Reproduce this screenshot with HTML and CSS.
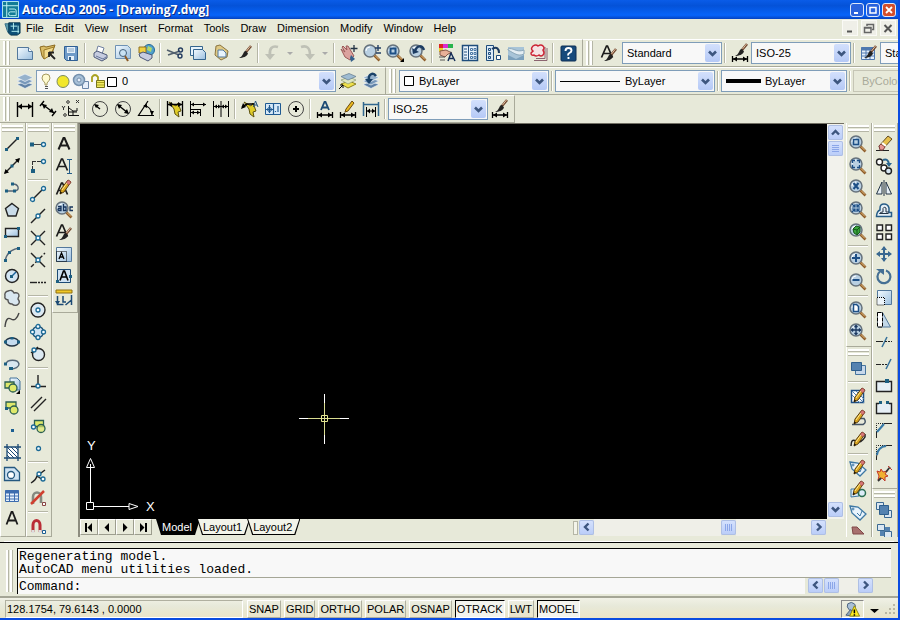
FILE: index.html
```html
<!DOCTYPE html>
<html lang="en">
<head>
<meta charset="utf-8">
<title>AutoCAD 2005 - [Drawing7.dwg]</title>
<link rel="stylesheet" href="styles.css">
</head>
<body>
<svg class="defs" aria-hidden="true">
  <defs>
    <linearGradient id="sheet" x1="0" y1="0" x2="1" y2="1"><stop offset="0" stop-color="#f4fbff"/><stop offset="1" stop-color="#9bbfdf"/></linearGradient>
    <symbol id="chev"><path d="M4 5.500l3.500 3.500 3.500-3.500" fill="none" stroke="#3d567f" stroke-width="2.600"/></symbol>
    <symbol id="lens"><circle cx="8" cy="8" r="6" fill="#b9d0e2" stroke="#66727c" stroke-width="1.500"/><path d="M4 8a4 4 0 0 1 4-4" stroke="#fff" fill="none"/><path d="M12.500 12.500l5 5" stroke="#8c5a28" stroke-width="2.600"/><path d="M13 12.500l4 4" stroke="#e8c080"/></symbol>
    <symbol id="pencil"><path d="M14 2l3 2-7 10-4 2 1-5z" fill="#d9a520" stroke="#5b4010"/><path d="M14 2l3 2-2 3-3-2z" fill="#d87878" stroke="#8a4040" stroke-width=".600"/><path d="M8 12l5-7" stroke="#ffe890"/><path d="M6 16l.500-2.500 1.500 1z" fill="#000"/></symbol>
    <symbol id="brush"><path d="M17 3l-5 6" stroke="#704830" stroke-width="2.600"/><path d="M16.500 3l-4 5" stroke="#e0bca0"/><path d="M12 8l2 2.500c-1 3-5 4.500-9 4.500 2-1 3-2 4-4s1-3 3-3z" fill="#222" stroke="none"/></symbol>
    <symbol id="dim"><path d="M2.500 13v6M17.500 13v6M3 16h14" stroke="#000" stroke-width="1.300"/><path d="M3 16l4-2.500v5zM17 16l-4-2.500v5z" fill="#000" stroke="none"/></symbol>
    <symbol id="layers"><path d="M2 13.500l8-3 8 3-8 4z" fill="#5f81a6" stroke="#eef3f8" stroke-width=".700"/><path d="M2 10l8-3 8 3-8 4z" fill="#7898ba" stroke="#eef3f8" stroke-width=".700"/><path d="M2 6.500l8-3.500 8 3.500-8 4z" fill="#96b2cc" stroke="#eef3f8" stroke-width=".700"/></symbol>
    <symbol id="bolt"><path d="M4 3l7 4 2-3 3 8-3 1 1 5-4-3-1-5z" fill="#e0cc28" stroke="#5c5210"/></symbol>
    <symbol id="obj"><path d="M6.500 4.500h9v6h-9z" fill="#dfe96b" stroke="#2b5f52" stroke-width="1.300"/><circle cx="13" cy="12.500" r="4" fill="#dfe96b" fill-opacity=".700" stroke="#2b5f52" stroke-width="1.300"/></symbol>
    <symbol id="paper"><path d="M2.500 4.500h11l4 4v8h-15z" fill="url(#sheet)" stroke="#53789c"/><path d="M13.500 4.500v4h4" fill="#fff" stroke="#53789c"/></symbol>
    <symbol id="printer"><path d="M6 10l2-7 6 2-2 6" fill="#fff" stroke="#7181a0"/><path d="M4 10l3-2 10 4v3l-5 3-8-4z" fill="#c6cce0" stroke="#4c5878"/><path d="M6 13l7 3 3-2" fill="none" stroke="#68789c"/></symbol>
    <symbol id="bigA"><path d="M2.500 14.500L7.500 3h1l5 11.500M4.500 10.500h7" fill="none" stroke="#1b1b1b" stroke-width="1.700"/></symbol>
    <symbol id="tag"><path d="M2 4l8 1 8 7-6 6-8-7z" fill="#e8f3fc" stroke="#3e78a4" stroke-width="1.300"/><circle cx="5" cy="7" r="1" fill="none" stroke="#3e78a4"/><path d="M9 11l3 3 2-5" fill="none" stroke="#3e78a4"/></symbol>
  </defs>
</svg>

<header class="titlebar">
  <svg class="i18" viewBox="0 0 18 18"><path d="M.500 .500h17v17h-17z" fill="#127c96" stroke="#b9eef2"/><path d="M5 1v16M1 5h16M7.500 8.500h5.500q2 0 2 2v5H9q-2 0-2-2t2-2h5" fill="none" stroke="#c6f6f6"/></svg>
  <h1>AutoCAD 2005 - [Drawing7.dwg]</h1>
  <div class="winctl">
    <button aria-label="Minimize"><svg class="i12"><path d="M3 9h4" stroke="#fff" stroke-width="2"/></svg></button>
    <button aria-label="Maximize"><svg class="i12"><path d="M3 3.500h6v5.500H3z" stroke="#fff" stroke-width="1.500"/></svg></button>
    <button class="close" aria-label="Close"><svg class="i12"><path d="M3 3l6 6M9 3l-6 6" stroke="#fff" stroke-width="1.800"/></svg></button>
  </div>
</header>

<nav class="menubar">
  <svg class="i18" viewBox="0 0 18 18"><path d="M1 4h12v9H4z" fill="#5d9cb0" stroke="#356d85"/><path d="M5 3h12v11l-3 2H7l-2-2z" fill="#0d5078" stroke="#073650"/><path d="M10 3v7M7 6.500h7M15 6v8M8 12h8" stroke="#b8f2f4"/></svg>
  <button>File</button><button>Edit</button><button>View</button><button>Insert</button><button>Format</button><button>Tools</button><button>Draw</button><button>Dimension</button><button>Modify</button><button>Window</button><button>Help</button>
  <div class="mdi">
    <button aria-label="Minimize drawing"><svg class="i12"><path d="M3 9.500h5" stroke="#555" stroke-width="2"/></svg></button>
    <button aria-label="Restore drawing"><svg class="i12"><path d="M4 4V2.500h6.500v5H9M1.500 5.500h6.500v5H1.500zM1.500 6h6.500" stroke="#666" stroke-width="1.500"/></svg></button>
    <button aria-label="Close drawing"><svg class="i12"><path d="M2.500 3l7 7M9.500 3l-7 7" stroke="#555" stroke-width="2"/></svg></button>
  </div>
</nav>

<div class="row">
  <div class="bar">
    <span class="grip"></span>
    <button class="t" aria-label="New"><svg><use href="#paper"/></svg></button>
    <button class="t" aria-label="Open"><svg><path d="M2 4l4-1 2 1 9-2-3 8-8 6-2-3z" fill="#d9bc66" stroke="#8b6a20"/><path d="M6 7l10-3-3 8-7 4z" fill="#f2dc90" stroke="#9b7a28"/><path d="M11 10l6 6M11 9v5M11 9.500h5" stroke="#222" stroke-width="1.800"/></svg></button>
    <button class="t" aria-label="Save"><svg><path d="M3.500 3.500h13v14h-11l-2-2z" fill="#6f9bc8" stroke="#2f5f94"/><path d="M6 4h8v6H6zM7 13h6v4H7z" fill="#e6f1fb"/><path d="M7 6h6M7 8h6" stroke="#86a5c2"/><path d="M9 14v3" stroke="#315d8a" stroke-width="2"/></svg></button>
    <span class="sep"></span>
    <button class="t" aria-label="Plot"><svg><use href="#printer"/></svg></button>
    <button class="t" aria-label="Plot Preview"><svg><path d="M2.500 2.500h12l3 3v10h-15z" fill="url(#sheet)" stroke="#6f92b4"/><circle cx="10" cy="10" r="3.500" fill="#c8e2f4" stroke="#44617c"/><path d="M12 13l3 5" stroke="#8c5a28" stroke-width="2"/></svg></button>
    <button class="t" aria-label="Publish"><svg><circle cx="13" cy="7" r="5.500" fill="#4fa0cc" stroke="#246898"/><path d="M12 3l4 2-1 4-4-2z" fill="#b4d868"/><path d="M3 4h7v6H3z" fill="#f0d040" stroke="#907020"/><path d="M3 11l4-2 9 3v3l-4 3-8-4z" fill="#c6cce0" stroke="#4c5878"/></svg></button>
    <span class="sep"></span>
    <button class="t" aria-label="Cut"><svg><path d="M2 7l12 5M3 12l12-4" stroke="#52606e" stroke-width="1.600"/><circle cx="15.500" cy="7" r="2" stroke="#243c60" stroke-width="1.400"/><circle cx="15" cy="13" r="2" stroke="#243c60" stroke-width="1.400"/></svg></button>
    <button class="t" aria-label="Copy"><svg><path d="M2.500 3.500h12v9h-12z" fill="#e8f4fd" stroke="#35658e"/><path d="M5.500 6.500h9l3 3v7h-12z" fill="url(#sheet)" stroke="#35658e"/></svg></button>
    <button class="t" aria-label="Paste"><svg><path d="M5 3l4-1 8 6-1 6-6 3-6-5z" fill="#dfc985" stroke="#8a7440"/><path d="M7 7h5l3 3v4H7z" fill="#e8f4fd" stroke="#53789c"/></svg></button>
    <button class="t" aria-label="Match Properties"><svg><use href="#brush"/></svg></button>
    <span class="sep"></span>
    <button class="t" aria-label="Undo"><svg><path d="M15 4C9 2 6 6 7 12" stroke="#bfc1b6" stroke-width="2.600"/><path d="M2 11h10l-5 6z" fill="#bfc1b6"/></svg></button>
    <button class="drop" aria-label="Undo list"><svg class="i8"><path d="M1 3h6L4 6z" fill="#aaa"/></svg></button>
    <button class="t" aria-label="Redo"><svg><path d="M3 4c6-2 9 1 9 8" stroke="#bfc1b6" stroke-width="2.600"/><path d="M7 11h10l-5 6z" fill="#bfc1b6"/></svg></button>
    <button class="drop" aria-label="Redo list"><svg class="i8"><path d="M1 3h6L4 6z" fill="#aaa"/></svg></button>
    <span class="sep"></span>
    <button class="t" aria-label="Pan"><svg><path d="M2 6l4 3-3-5 1-1 4 4-1-4h2l3 5 3 5-4 4-5-3z" fill="#dba29e" stroke="#9b5a58"/><path d="M12 12l4 4-4 3-1-4z" fill="#35608a"/><path d="M15 2v7M11.500 5.500h7" stroke="#234" stroke-width="1.300"/></svg></button>
    <button class="t" aria-label="Zoom Realtime"><svg><use href="#lens"/><path d="M16 2v6M13 5h6M14 10h5" stroke="#233f66" stroke-width="1.400"/></svg></button>
    <button class="t" aria-label="Zoom Window"><svg><use href="#lens"/><path d="M5.500 5.500h5v5h-5z" stroke="#1d4f86" stroke-width="2"/><path d="M19 15v4h-4z" fill="#000"/></svg></button>
    <button class="t" aria-label="Zoom Previous"><svg><use href="#lens"/><path d="M7 8C9 2 14 2 16 7" stroke="#1c3c62" stroke-width="2.500"/><path d="M4 5l1 6 6-2z" fill="#1c3c62"/></svg></button>
    <span class="sep"></span>
    <button class="t" aria-label="Properties"><svg><path d="M2 1h4v4H2z" fill="#d22"/><path d="M6 1h5v4H6z" fill="#db2bd0"/><path d="M11 1h5v4h-5z" fill="#28b44c"/><path d="M2 5h4v4H2z" fill="#ead028"/><path d="M3 8l6-1 6 3-4 1-3 3-5-2z" fill="#e8b198" stroke="#84584a"/><path d="M2 14h6M3 17h5" stroke="#555"/><path d="M11 18l3-8 4 8M12 15.500h4" stroke="#162f58" stroke-width="1.500"/></svg></button>
    <button class="t" aria-label="DesignCenter"><svg><path d="M2.500 2.500h15v15h-15z" fill="#eaf4fc" stroke="#1f4d7c" stroke-width="1.500"/><path d="M8.500 3v14M4 6h3M4 9h3M4 12h3M4 15h3" stroke="#1f4d7c"/><path d="M10.500 5.500h2v2h-2zM14 5.500h2v2h-2zM10.500 9.500h2v2h-2zM14 9.500h2v2h-2zM10.500 13.500h2v2h-2zM14 13.500h2v2h-2z" stroke="#4a77a4"/></svg></button>
    <button class="t" aria-label="Tool Palettes"><svg><path d="M3.500 2.500h7v15h-7z" fill="#dcebf7" stroke="#1f4d7c"/><path d="M5.500 5.500h2v2h-2zM5.500 9.500h2v2h-2zM5.500 13.500h2v2h-2z" stroke="#1f4d7c"/><path d="M9 6c5-3 7 0 7 4" stroke="#1c3c62" stroke-width="2"/><path d="M13.500 12.500h4v4h-4z" fill="#fff" stroke="#1f4d7c"/></svg></button>
    <button class="t" aria-label="Sheet Set Manager"><svg><path d="M2 4h16v13H2z" fill="#a8c4d8"/><path d="M2 6c5-2 8 4 16 1v4c-6 3-10-1-16-4z" fill="#e3edf3" stroke="#8aa6b8"/><path d="M2 12l8 4 8-4v5H2z" fill="#7ba0bc"/></svg></button>
    <button class="t" aria-label="Markup Set Manager"><svg><path d="M5 17.500h13V5M7 15.500h9V4" stroke="#8b6470"/><path d="M4 3q3-2 5 0 3-2 5 0 2 2 0 4 2 3 0 5-2 2-4 0-3 2-5 0-3 1-3-2 1-1 2-2-3-2 0-5z" fill="#f6e4e4" stroke="#cc2434" stroke-width="1.500"/></svg></button>
    <span class="sep"></span>
    <button class="t" aria-label="Help"><svg><rect x="3" y="3" width="15" height="15" rx="1" fill="#174a7c" stroke="#0e2f55"/><path d="M7.500 8q0-3 3-3t3 2.500q0 1.500-2 2.500t-1 2.500M10.500 14v2" stroke="#fff" stroke-width="1.900"/></svg></button>
  </div>
  <div class="bar grow">
    <span class="grip"></span>
    <button class="t wide" aria-label="Text Style Manager"><svg><use href="#bigA"/><use href="#brush" y="3"/></svg></button>
    <label class="combo c100"><select aria-label="Text style"><option>Standard</option></select><svg class="chev"><use href="#chev"/></svg></label>
    <span class="sep"></span>
    <button class="t" aria-label="Dimension Style Manager"><svg><use href="#dim"/><use href="#brush" y="-2"/></svg></button>
    <label class="combo c100"><select aria-label="Dimension style"><option>ISO-25</option></select><svg class="chev"><use href="#chev"/></svg></label>
    <span class="sep"></span>
    <button class="t" aria-label="Table Style Manager"><svg><path d="M2.500 4.500h13v12h-13z" fill="#e3effa" stroke="#4f79b0"/><path d="M2 6h14" stroke="#4f79b0" stroke-width="3"/><path d="M3 10h12M3 13h12M7 5v11M11 5v11" stroke="#4f79b0"/><use href="#brush"/></svg></button>
    <label class="combo c100"><select aria-label="Table style"><option>Standard</option></select><svg class="chev"><use href="#chev"/></svg></label>
  </div>
</div>

<div class="row">
  <div class="bar">
    <span class="grip"></span>
    <button class="t" aria-label="Layer Properties Manager"><svg><use href="#layers"/></svg></button>
    <label class="combo c300">
      <svg class="layericons"><path d="M5 12v-2q-3-3-3-5a4 4 0 0 1 8 0q0 2-3 5v2z" fill="#fffbd0" stroke="#a59a60"/><path d="M5 13.500h3M5 15.500h3" stroke="#555"/><circle cx="23" cy="8.500" r="6" fill="#f2e72c" stroke="#7b8a60"/><path d="M42.500 8.500h6v7h-6z" fill="#e6eefa" stroke="#6a85a8"/><circle cx="39" cy="7" r="5.500" fill="#a8c0d8" stroke="#7590ad" stroke-width="1.500"/><circle cx="39" cy="7" r="2" fill="#e6eefa" stroke="#7590ad"/><path d="M52 9V4q3-4 6 0v4" stroke="#a8a020" stroke-width="1.800"/><path d="M56.500 7.500h8v7h-8z" fill="#f0ea60" stroke="#77741c"/><path d="M57 9.500h7M57 12h7" stroke="#a8a020"/><path d="M67.500 4.500h9v9h-9z" fill="#fff" stroke="#000"/></svg>
      <select aria-label="Layer"><option>0</option></select><svg class="chev"><use href="#chev"/></svg></label>
    <button class="t" aria-label="Make Object's Layer Current"><svg><path d="M3 13l8-3 7 3-8 4z" fill="#efe04a" stroke="#8a8020"/><path d="M3 9l8-3 7 3-8 4z" fill="#dfe6c0" stroke="#8c9c78" stroke-width=".700"/><path d="M3 5.500l8-3 7 3-8 3.500z" fill="#9fbcd2" stroke="#60788c" stroke-width=".700"/><path d="M1 18l4-4M2 14h3v3" stroke="#000"/></svg></button>
    <button class="t" aria-label="Layer Previous"><svg><use href="#layers"/><path d="M8 9C7 3 12 1 15 5" stroke="#1b4268" stroke-width="2.500"/><path d="M4 8h8l-4 5z" fill="#1b4268"/></svg></button>
  </div>
  <div class="bar grow">
    <span class="grip"></span>
    <label class="combo c150"><svg class="swatch"><path d="M2.500 2.500h9v9h-9z" fill="#fff" stroke="#000"/></svg><select aria-label="Color"><option>ByLayer</option></select><svg class="chev"><use href="#chev"/></svg></label>
    <span class="sep"></span>
    <label class="combo c160"><svg class="linetype"><path d="M0 7.500h60" stroke="#000"/></svg><select aria-label="Linetype"><option>ByLayer</option></select><svg class="chev"><use href="#chev"/></svg></label>
    <span class="sep"></span>
    <label class="combo c126"><svg class="weight"><path d="M0 7h35" stroke="#000" stroke-width="4"/></svg><select aria-label="Lineweight"><option>ByLayer</option></select><svg class="chev"><use href="#chev"/></svg></label>
    <span class="sep"></span>
    <label class="combo c100 off"><select aria-label="Plot style" disabled><option>ByColor</option></select></label>
  </div>
</div>

<div class="row">
  <div class="bar">
    <span class="grip"></span>
    <button class="t" aria-label="Linear Dimension"><svg><path d="M2.500 3v15M17.500 3v15M3 7.500h14" stroke="#000" stroke-width="1.400"/><path d="M3 7.500l4-3v6zM17 7.500l-4-3v6z" fill="#000"/></svg></button>
    <button class="t" aria-label="Aligned Dimension"><svg><path d="M6 2L2 7M18 12l-4 5M4 5l12 9" stroke="#000" stroke-width="1.400"/><path d="M4 5l5 1-3 4zM16 14l-2-5-3 4z" fill="#000"/></svg></button>
    <button class="t" aria-label="Ordinate Dimension"><svg><path d="M7.500 7v9.500H18M8 9l4 3h4V9M8 13h8M12 12v5" stroke="#111"/><circle cx="7" cy="3" r="1.300" stroke="#333"/><circle cx="4" cy="16" r="1.300" stroke="#333"/><path d="M15 1l3 3M18 1l-3 3M1 7l1.500 2L4 7M2.500 9v2" stroke="#333"/></svg></button>
    <span class="sep"></span>
    <button class="t" aria-label="Radius Dimension"><svg><circle cx="10" cy="10" r="7.500" stroke="#444"/><path d="M10 10L5 6" stroke="#000" stroke-width="1.500"/><path d="M4 5l5 1-3 3z" fill="#000"/></svg></button>
    <button class="t" aria-label="Diameter Dimension"><svg><circle cx="10" cy="10" r="7.500" stroke="#444"/><path d="M5 6l10 8" stroke="#000" stroke-width="1.500"/><path d="M4 5l5 1-3 4zM16 15l-5-1 3-4z" fill="#000"/></svg></button>
    <button class="t" aria-label="Angular Dimension"><svg><path d="M12 2L2.500 16.500H18M8 7q7 0 8 9" stroke="#000" stroke-width="1.200"/><path d="M7 7l4-2v4zM16 16l-2-4h4z" fill="#000"/></svg></button>
    <span class="sep"></span>
    <button class="t" aria-label="Quick Dimension"><svg><use href="#bolt"/><path d="M2.500 2v15M17.500 2v15M3 5.500h14" stroke="#000" stroke-width="1.300"/><path d="M3 5.500l4-2.500v5zM17 5.500l-4-2.500v5z" fill="#000"/></svg></button>
    <button class="t" aria-label="Baseline Dimension"><svg><path d="M2.500 2v16M3 5.500h15M3 13.500h9M12.500 10v7M3 10.500h9" stroke="#000"/><path d="M3 5.500l3-2v4zM18 5.500l-3-2v4zM3 13.500l3-2v4zM12 13.500l-3-2v4z" fill="#000"/></svg></button>
    <button class="t" aria-label="Continue Dimension"><svg><path d="M2.500 2v16M10 2v16M17.500 2v16M3 7.500h14" stroke="#000"/><path d="M3 7.500l3-2v4zM10 7.500l-3-2v4zM10 7.500l3-2v4zM17 7.500l-3-2v4z" fill="#000"/></svg></button>
    <span class="sep"></span>
    <button class="t" aria-label="Quick Leader"><svg><use href="#bolt"/><path d="M2 8l5-3h7" stroke="#000" stroke-width="1.500"/><path d="M1 10l2-6 3 4z" fill="#000"/><path d="M13.500 8l2-6 2.500 6M14 6h3" stroke="#27537d"/></svg></button>
    <button class="t" aria-label="Tolerance"><svg><path d="M2.500 4.500h15v11h-15z" fill="#d6e9f8" stroke="#1f5a92"/><path d="M10.500 5v10M6.500 6v8M3 10.500h7M15 7v6M12.500 12v1" stroke="#1f5a92" stroke-width="1.200"/><circle cx="6.500" cy="10.500" r="2" stroke="#1f5a92"/></svg></button>
    <button class="t" aria-label="Center Mark"><svg><circle cx="10" cy="10" r="7.500" stroke="#444"/><path d="M10 7v6M7 10h6" stroke="#000" stroke-width="2"/></svg></button>
    <span class="sep"></span>
    <button class="t" aria-label="Dimension Edit"><svg><use href="#dim"/><path d="M6 11l3.500-8h1l3.500 8M7.500 8.500h5" stroke="#1c4a74" stroke-width="1.800"/></svg></button>
    <button class="t" aria-label="Dimension Text Edit"><svg><use href="#dim"/><path d="M14 2l2 2-6 8-3 1 1-3z" fill="#e8b820" stroke="#6b4a10"/></svg></button>
    <button class="t" aria-label="Dimension Update"><svg><path d="M2.500 3v14M17.500 3v14M3 5.500h14" stroke="#31688f" stroke-width="1.500"/><path d="M5.500 8v10M14.500 8v10M6 12h8" stroke="#000"/><path d="M6 12l3-2.500v5zM14 12l-3-2.500v5z" fill="#000"/></svg></button>
    <span class="sep"></span>
    <label class="combo c100"><select aria-label="Dimension style"><option>ISO-25</option></select><svg class="chev"><use href="#chev"/></svg></label>
    <button class="t" aria-label="Dimension Style"><svg><use href="#dim"/><use href="#brush" y="-2"/></svg></button>
  </div>
</div>

<main class="work">
  <aside class="dock">
    <div class="vbar full">
      <span class="vgrip"></span>
      <button class="t" aria-label="Line"><svg class="k"><path d="M4 16L16 4"/><path class="nd" d="M3 14h3v3H3zM14 3h3v3h-3z"/></svg></button>
      <button class="t" aria-label="Construction Line"><svg class="k"><path d="M3 17L17 3"/><path d="M2 18l1.500-5 3.500 3.500zM18 2l-5 1.500L16.500 7z" fill="#000" stroke="none"/><path class="nd" d="M8.500 8.500h3v3h-3z"/></svg></button>
      <button class="t" aria-label="Polyline"><svg class="k"><path d="M4 13h9q4-1 3-4-1-3-5-3" stroke="#567"/><path class="nd" d="M3 11.500h3v3H3zM11 11.500h3v3h-3zM9 4.500h3v3H9z"/></svg></button>
      <button class="t" aria-label="Polygon"><svg class="k"><path d="M10 3.500l6.500 5-2.500 7.500H6L3.500 8.500z" fill="#c9dbe8"/></svg></button>
      <button class="t" aria-label="Rectangle"><svg class="k"><path d="M3.500 6.500h13v8h-13z" fill="url(#sheet)"/><path class="nd" d="M2 13h3v3H2zM15 5h3v3h-3z"/></svg></button>
      <button class="t" aria-label="Arc"><svg class="k"><path d="M3 17Q5 6 17 4" stroke="#567"/><path class="nd" d="M2 15h3v3H2zM6 7h3v3H6zM15 3h3v3h-3z"/></svg></button>
      <button class="t" aria-label="Circle"><svg class="k"><circle cx="10" cy="10" r="6.500" fill="#d3e5f3"/><path d="M10 10l4-4" stroke="#1b659e"/><path class="nd" d="M8 9h3v3H8z"/></svg></button>
      <button class="t" aria-label="Revision Cloud"><svg class="k"><path d="M6 3q4-2 6 2 5-1 5 3-1 2-1 3 3 4-1 6-3 1-5-1-4 0-4-4-4-1-3-4-1-4 3-5z" fill="#d9e7f0" stroke="#555"/></svg></button>
      <button class="t" aria-label="Spline"><svg class="k"><path d="M3 17Q4 6 9 9t8-6" stroke="#444"/></svg></button>
      <button class="t" aria-label="Ellipse"><svg class="k"><ellipse cx="10" cy="10" rx="6.500" ry="4" fill="#c5dcef" stroke="#234"/><path class="nd" d="M2 8.500h3v3H2zM15 8.500h3v3h-3zM8.500 5h3v2.500h-3z"/></svg></button>
      <button class="t" aria-label="Ellipse Arc"><svg class="k"><path d="M4 10c1-5 12-5 13 0 0 3-4 5-8 5" fill="#d9e7f0" stroke="#567"/><path class="nd" d="M2 8.500h3v3H2zM7 13h4v3H7z"/></svg></button>
      <button class="t" aria-label="Insert Block"><svg><path d="M8 2h7l3 3v9H8z" fill="url(#sheet)" stroke="#47759b"/><path d="M3 6h9v6H3z" fill="#dfe96b" stroke="#2b5f52" stroke-width="1.300"/><circle cx="11" cy="12" r="4" fill="#dfe96b" stroke="#2b5f52" stroke-width="1.300"/><path d="M18 14v4h-4z" fill="#000"/></svg></button>
      <button class="t" aria-label="Make Block"><svg><path d="M4 4h10v6H4z" fill="#dfe96b" stroke="#2b5f52" stroke-width="1.300"/><circle cx="12" cy="12" r="4" fill="#dfe96b" stroke="#2b5f52" stroke-width="1.300"/><path class="nd" d="M3 9h3v3H3z"/></svg></button>
      <button class="t" aria-label="Point"><svg><path d="M9 9h3v3H9z" fill="#1c5f92"/></svg></button>
      <button class="t" aria-label="Hatch"><svg><path d="M5 5h11v11H5z" fill="#fff"/><path d="M5 9l7 7M5 5l11 11M9 5l7 7M5 13l3 3M13 5l3 3" stroke="#1c4a74"/><path d="M5 2v17M16 2v17M2 5h17M2 16h17" stroke="#1c4a74" stroke-width="1.300"/></svg></button>
      <button class="t" aria-label="Region"><svg><path d="M2.500 3.500h10l5 5v8h-15z" fill="#cfe3f3" stroke="#25587f" stroke-width="1.300"/><circle cx="9" cy="11" r="3.500" fill="#fff" stroke="#25587f" stroke-width="1.300"/></svg></button>
      <button class="t" aria-label="Table"><svg><path d="M3.500 4.500h13v11h-13z" fill="#e5f0fc" stroke="#3c6cae"/><path d="M3 6h14" stroke="#3c6cae" stroke-width="3"/><path d="M3 10h14M3 13h14M7.500 5v11M12.500 5v11" stroke="#3c6cae"/></svg></button>
      <button class="t" aria-label="Multiline Text"><svg><path d="M4.500 16.500L9.500 4h1l5 12.500M6.500 12.500h7.500" stroke="#1b1b1b" stroke-width="1.800"/></svg></button>
    </div>
    <div class="vbar full">
      <span class="vgrip"></span>
      <button class="t" aria-label="Temporary Tracking"><svg><path d="M4 10.500h12" stroke="#444"/><path class="nd" d="M2 8.500h4v4H2z"/><circle class="nc" cx="15.500" cy="10.500" r="2"/></svg></button>
      <button class="t" aria-label="Snap From"><svg><path d="M4 5.500h11M4.500 5v11" stroke="#333" stroke-dasharray="4 1"/><path class="nd" d="M3 13h4v4H3z"/><circle class="nc" cx="15.500" cy="5.500" r="2"/></svg></button>
      <span class="hsep"></span>
      <button class="t" aria-label="Snap to Endpoint"><svg class="k"><path d="M5 15L15 5"/><circle class="nc" cx="4.500" cy="15.500" r="2"/><circle class="nc" cx="15.500" cy="4.500" r="2"/></svg></button>
      <button class="t" aria-label="Snap to Midpoint"><svg class="k"><path d="M3 17L17 3"/><circle class="nc" cx="10" cy="10" r="2"/></svg></button>
      <button class="t" aria-label="Snap to Intersection"><svg class="k"><path d="M3 3l14 14M3 17L17 3"/><circle class="nc" cx="10" cy="10" r="2"/></svg></button>
      <button class="t" aria-label="Snap to Apparent Intersection"><svg class="k"><path d="M3 3l14 14"/><path d="M3 17L17 3" stroke-dasharray="4 2"/><circle class="nc" cx="10" cy="10" r="2"/></svg></button>
      <button class="t" aria-label="Snap to Extension"><svg class="k"><path d="M2 10.500h7"/><path d="M10 10.500h8" stroke-dasharray="2 1"/></svg></button>
      <span class="hsep"></span>
      <button class="t" aria-label="Snap to Center"><svg class="k"><circle cx="10" cy="10" r="7" fill="#dce9f2"/><circle class="nc" cx="10" cy="10" r="2"/></svg></button>
      <button class="t" aria-label="Snap to Quadrant"><svg class="k"><circle cx="10" cy="10" r="5.500" fill="#cfe3f3" stroke="#1c4f72"/><circle class="nc" cx="10" cy="4.500" r="2"/><circle class="nc" cx="10" cy="15.500" r="2"/><circle class="nc" cx="4.500" cy="10" r="2"/><circle class="nc" cx="15.500" cy="10" r="2"/></svg></button>
      <button class="t" aria-label="Snap to Tangent"><svg class="k"><circle cx="10.500" cy="10.500" r="6" fill="#dce9f2"/><path d="M3 9l7-6"/><circle class="nc" cx="6" cy="6" r="2"/></svg></button>
      <span class="hsep"></span>
      <button class="t" aria-label="Snap to Perpendicular"><svg class="k"><path d="M10 3v10M3 14.500h15"/><circle class="nc" cx="10" cy="14" r="2"/></svg></button>
      <button class="t" aria-label="Snap to Parallel"><svg class="k"><path d="M3 14L14 3M6 17L18 5"/></svg></button>
      <button class="t" aria-label="Snap to Insert"><svg><use href="#obj"/><circle class="nc" cx="5.500" cy="11" r="2"/></svg></button>
      <button class="t" aria-label="Snap to Node"><svg><circle class="nc" cx="10.500" cy="10.500" r="2"/></svg></button>
      <span class="hsep"></span>
      <button class="t" aria-label="Snap to Nearest"><svg class="k"><path d="M3 17q5-3 6-7l8-6M9 10l6 4"/><circle class="nc" cx="11" cy="8" r="2"/><circle class="nc" cx="15" cy="13" r="2"/></svg></button>
      <button class="t" aria-label="Snap to None"><svg><path d="M5 16V9c0-6 8-6 8 0v6" stroke="#858a80" stroke-width="2.600"/><path d="M3 16L16 3" stroke="#d04030" stroke-width="2.500"/><path d="M14.500 14.500h3v3h-3z" fill="#fff" stroke="#844"/></svg></button>
      <span class="hsep"></span>
      <button class="t" aria-label="Object Snap Settings"><svg><path d="M5 16V9c0-6 7-6 7 0v7" stroke="#b92d36" stroke-width="3"/><path d="M5 14v3M12 14v3" stroke="#ddd" stroke-width="3"/><path d="M14.500 14.500h3v3h-3z" fill="#fff" stroke="#1c5f92"/></svg></button>
    </div>
    <div class="vbar">
      <span class="vgrip"></span>
      <button class="t" aria-label="Multiline Text"><svg><path d="M4.500 15.500L9.500 4h1l5 11.500M6.500 11.500h7.500" stroke="#1b1b1b" stroke-width="2"/></svg></button>
      <button class="t" aria-label="Single Line Text"><svg><use href="#bigA"/><path d="M13 3.500h5M15.500 4v13M13 17.500h5" stroke="#245c88"/></svg></button>
      <button class="t" aria-label="Edit Text"><svg><use href="#bigA" y="2"/><use href="#pencil"/></svg></button>
      <button class="t" aria-label="Find and Replace"><svg><use href="#lens"/><path d="M4 6.500h3v4H4.500q-1-1 0-2H7M9.500 4v6.500h2.500V7H9.500M19 7h-3v3.500h3" stroke="#16345c" stroke-width="1.300"/></svg></button>
      <button class="t" aria-label="Text Style"><svg><use href="#bigA"/><use href="#brush" y="3"/></svg></button>
      <button class="t" aria-label="Scale Text"><svg><path d="M2.500 3.500h15v14h-15z" fill="url(#sheet)" stroke="#53789c"/><path d="M2.500 7.500h10v10h-10z" stroke="#000" stroke-dasharray="1 1"/><path d="M5 15l2.500-6L10 15M6 13h3" stroke="#000" stroke-width="1.300"/></svg></button>
      <button class="t" aria-label="Justify Text"><svg><path d="M3.500 3.500h13v13h-13z" fill="#cfe2f2" stroke="#1c4a74"/><path d="M6 14.500L9.500 5h1l3.500 9.500M7.500 11h5" stroke="#000" stroke-width="1.600"/><path class="nd" d="M2 14h3v3H2zM15 9h3v3h-3z"/></svg></button>
      <button class="t" aria-label="Convert Distance"><svg><path d="M2 2h16v3H2z" fill="#f0c828" stroke="#907010"/><path d="M3.500 8v8.500h6M9 8v6h3M17.500 7v5l-6 5M17.500 12v5" stroke="#1c4a74" stroke-width="1.500"/><path d="M1 13l2.500 4L6 13z" fill="#1c4a74"/></svg></button>
    </div>
  </aside>

  <section class="view">
    <div class="viewtop">
      <div class="canvas">
        <svg class="cross"><path d="M25.500 0v50M0 24.500h50" stroke="#fff"/><path d="M25.500 9v32M9 24.500h32" stroke="#d9dc90"/><path d="M22.500 21.500h6v6h-6z" stroke="#e4e690"/></svg>
        <svg class="ucs"><path d="M7.500 64V25M11 67.500h35M3.500 63.500h7v7h-7zM7.500 19.500l-4 9h8zM55 67.500l-9-3v6z" stroke="#fff"/><text x="4" y="11">Y</text><text x="63" y="72">X</text></svg>
      </div>
      <div class="vscroll">
        <button class="sb" aria-label="Scroll up"><svg class="i15"><path d="M4 9.500L7.500 6 11 9.500" stroke="#3d567f" stroke-width="2.400"/></svg></button>
        <button class="sb" aria-label="Vertical position"><svg class="i15"><path d="M4 4.500h7M4 6.500h7M4 8.500h7M4 10.500h7" stroke="#8ba6e8"/></svg></button>
        <span class="space"></span>
        <button class="sb" aria-label="Scroll down"><svg class="i15"><use href="#chev"/></svg></button>
      </div>
    </div>
    <div class="tabs">
      <div class="tabnav">
        <button aria-label="First tab"><svg class="i12"><path d="M2 2h2v9H2zM9 2v9L4.500 6.500z" fill="#000"/></svg></button>
        <button aria-label="Previous tab"><svg class="i12"><path d="M8 2v9L3.500 6.500z" fill="#000"/></svg></button>
        <button aria-label="Next tab"><svg class="i12"><path d="M4 2v9l4.500-4.500z" fill="#000"/></svg></button>
        <button aria-label="Last tab"><svg class="i12"><path d="M3 2v9l4.500-4.500zM8 2h2v9H8z" fill="#000"/></svg></button>
      </div>
      <button class="tab on">Model</button><button class="tab">Layout1</button><button class="tab">Layout2</button>
      <div class="hscroll">
        <span class="split"></span>
        <button class="sb" aria-label="Scroll left"><svg class="i15"><path d="M9.500 3.500L6 7l3.500 3.500" stroke="#3d567f" stroke-width="2.400"/></svg></button>
        <span class="track a"></span>
        <button class="sb" aria-label="Horizontal position"><svg class="i15"><path d="M4.500 4v7M6.500 4v7M8.500 4v7M10.500 4v7" stroke="#8ba6e8"/></svg></button>
        <span class="track b"></span>
        <button class="sb" aria-label="Scroll right"><svg class="i15"><path d="M6 3.500L9.500 7 6 10.500" stroke="#3d567f" stroke-width="2.400"/></svg></button>
        <span class="corner"></span>
      </div>
    </div>
  </section>

  <aside class="dock right">
    <div class="stack">
      <div class="vbar">
        <span class="vgrip"></span>
        <button class="t" aria-label="Zoom Window"><svg><use href="#lens"/><path d="M5.500 5.500h5v5h-5z" stroke="#1d4f86" stroke-width="1.500"/></svg></button>
        <button class="t" aria-label="Zoom Dynamic"><svg><use href="#lens"/><path d="M4.500 7V4.500H7M9 4.500h2.500V7M11.500 9v2.500H9M7 11.500H4.500V9" stroke="#1d4f86" stroke-width="1.300"/></svg></button>
        <button class="t" aria-label="Zoom Scale"><svg><use href="#lens"/><path d="M5.500 5l5 6M10.500 5l-5 6" stroke="#1d4f86" stroke-width="2"/></svg></button>
        <button class="t" aria-label="Zoom Center"><svg><use href="#lens"/><path d="M4 4l3 3M12 4L9 7M4 12l3-3M12 12L9 9M7 4v3H4M9 4v3h3M7 12V9H4M9 12V9h3" stroke="#1d4f86" stroke-width="1.200"/></svg></button>
        <button class="t" aria-label="Zoom Object"><svg><use href="#lens"/><path d="M5 7l3-3 4 1v5l-3 3-3-2z" fill="#39a63c" stroke="#135519"/><path d="M5 7l4 1 3-3M9 8v4" stroke="#135519"/></svg></button>
        <span class="hsep"></span>
        <button class="t" aria-label="Zoom In"><svg><use href="#lens"/><path d="M8 4v8M4 8h8" stroke="#1d4f86" stroke-width="2"/></svg></button>
        <button class="t" aria-label="Zoom Out"><svg><use href="#lens"/><path d="M4.500 8h7" stroke="#1d4f86" stroke-width="2"/></svg></button>
        <span class="hsep"></span>
        <button class="t" aria-label="Zoom All"><svg><use href="#lens"/><path d="M5.500 4.500h3l2 2v5h-5z" fill="#fff" stroke="#1d4f86" stroke-width="1.500"/></svg></button>
        <button class="t" aria-label="Zoom Extents"><svg><use href="#lens"/><path d="M8 3v10M3 8h10M6.500 5L8 3.500 9.500 5M6.500 11L8 12.500 9.500 11M5 6.500L3.500 8 5 9.500M11 6.500L12.500 8 11 9.500" stroke="#1b3860" stroke-width="1.300"/></svg></button>
      </div>
      <div class="vbar full">
        <span class="vgrip"></span>
        <button class="t" aria-label="Draw Order"><svg><path d="M7.500 7.500h10v9h-10z" fill="#c7d8ea" stroke="#46749d"/><path d="M3.500 4.500h10v8h-10z" fill="#5482b0" stroke="#2f5f8d"/></svg></button>
        <span class="hsep"></span>
        <button class="t" aria-label="Edit Hatch"><svg><path d="M3.500 4.500h12v12h-12z" fill="#fff" stroke="#1d4f86" stroke-width="1.500"/><path d="M4 9l8 8M4 5l12 12M8 5l8 8" stroke="#4f83b0"/><use href="#pencil"/></svg></button>
        <button class="t" aria-label="Edit Polyline"><svg><path d="M4 16.500h11q4-2 1-6h-4" stroke="#456" stroke-width="1.500"/><use href="#pencil"/></svg></button>
        <button class="t" aria-label="Edit Spline"><svg><path d="M3 16q0-8 5-5t9-4V4" stroke="#222" stroke-width="1.500"/><use href="#pencil"/></svg></button>
        <span class="hsep"></span>
        <button class="t" aria-label="Edit Attribute"><svg><use href="#tag"/><use href="#pencil"/></svg></button>
        <button class="t" aria-label="Block Attribute Manager"><svg><path d="M3 9h5l3 7-8 1z" fill="#dcecf8" stroke="#3e78a4"/><circle cx="14" cy="13" r="3.500" fill="#dcecf8" stroke="#2b6f52" stroke-width="1.500"/><use href="#pencil" x="-1" y="-1"/></svg></button>
        <button class="t" aria-label="Synchronize Attributes"><svg><use href="#tag"/></svg></button>
        <button class="t" aria-label="Attribute Extraction"><svg><path d="M4 3h5l7 7H5z" fill="#a8706e" stroke="#804848"/></svg></button>
      </div>
    </div>
    <div class="stack">
      <div class="vbar">
        <span class="vgrip"></span>
        <button class="t" aria-label="Erase"><svg><path d="M2 16.500h13" stroke="#222"/><path d="M5 12L14 2l4 3-9 10H6z" fill="#e7c04c" stroke="#604a20"/><path d="M5 12l2-2 4 3-2 3H6z" fill="#e89894" stroke="#804040"/><path d="M8 9l4 3" stroke="#fff" stroke-width="2"/></svg></button>
        <button class="t" aria-label="Copy Object"><svg class="k"><circle cx="5.500" cy="6" r="3" fill="#fff"/><circle cx="10" cy="12" r="3" fill="#fff"/><circle cx="14.500" cy="15" r="3" fill="#d6e6f2"/><path d="M9 4q5-2 6 4" stroke="#2a6590" stroke-width="2"/><path d="M12 7h6l-3 4z" fill="#2a6590" stroke="none"/></svg></button>
        <button class="t" aria-label="Mirror"><svg><path d="M8 4v12H2.500zM12 4v12h5.500z" fill="#e6eff6" stroke="#234"/><path d="M10 2v16" stroke="#234"/></svg></button>
        <button class="t" aria-label="Offset"><svg><path d="M2.500 16.500h15v-4H15V8q-1-4-5-4T6 8v2q-3 1-3.500 6z" fill="#e4eff7" stroke="#275d88" stroke-width="1.500"/><path d="M5.500 13.500h9M5.500 13.500Q6 12 9 12V8.500Q10 6 12 8v4h3" stroke="#234"/></svg></button>
        <button class="t" aria-label="Array"><svg class="k"><path d="M3 3h5.500v5.500H3zM12 3h5.500v5.500H12zM3 12h5.500v5.500H3zM12 12h5.500v5.500H12z" fill="#fff"/></svg></button>
        <button class="t" aria-label="Move"><svg><path d="M10 3v14M3 10h14" stroke="#3a6891" stroke-width="2"/><path d="M10 2l3 4H7zM10 18l3-4H7zM2 10l4-3v6zM18 10l-4-3v6z" fill="#3a6891"/></svg></button>
        <button class="t" aria-label="Rotate"><svg><path d="M12 4.500a6.500 6.500 0 1 1-6 1" stroke="#456f94" stroke-width="2.200"/><path d="M2 3h8v6z" fill="#456f94"/></svg></button>
        <button class="t" aria-label="Scale"><svg><path d="M3.500 2.500h14v14h-14z" fill="url(#sheet)" stroke="#53789c"/><path d="M3 9.500h7.500V17H3z" fill="#eef5fa" stroke="#000" stroke-dasharray="1 1"/></svg></button>
        <button class="t" aria-label="Stretch"><svg><path d="M3.500 2.500h5l8 14.500h-13z" fill="#c3d8e8" stroke="#53789c"/><path d="M3.500 2.500h5v14.500h-5z" fill="#fff" stroke="#000" stroke-dasharray="4 1"/></svg></button>
        <button class="t" aria-label="Trim"><svg><path d="M8 15l5-10" stroke="#35719b" stroke-width="1.500"/><path d="M2 9.500h7" stroke="#222"/><path d="M11 9.500h7" stroke="#222" stroke-dasharray="2 1"/></svg></button>
        <button class="t" aria-label="Extend"><svg><path d="M12 15l5-10" stroke="#35719b" stroke-width="1.500"/><path d="M2 10.500h5" stroke="#222"/><path d="M8 10.500h6" stroke="#222" stroke-dasharray="2 1"/></svg></button>
        <button class="t" aria-label="Break at Point"><svg class="k"><path d="M2.500 5.500h15v10h-15z" fill="#e6eff6"/><path class="nd" d="M11 3h4v4h-4z"/></svg></button>
        <button class="t" aria-label="Break"><svg class="k"><path d="M5 5.500H2.500v10h15v-10H15" fill="#e6eff6"/><path class="nd" d="M5 3h3v3H5zM12 3h3v3h-3z"/></svg></button>
        <button class="t" aria-label="Chamfer"><svg><path d="M2.500 12V3.500H10" stroke="#222" stroke-dasharray="1 1"/><path d="M2.500 18v-6L10 3.500h8" stroke="#222"/><path d="M3 12l7-8" stroke="#377aa8" stroke-width="2"/></svg></button>
        <button class="t" aria-label="Fillet"><svg><path d="M2.500 12V3.500H12" stroke="#222" stroke-dasharray="1 1"/><path d="M2.500 18v-3Q3 4 13 3.500h5" stroke="#222"/><path d="M3 13Q4 5 12 4" stroke="#377aa8" stroke-width="2"/></svg></button>
        <button class="t" aria-label="Explode"><svg><path d="M3 7l3 1 1-3 2 3 4-1-2 3 3 2-3 1v4l-3-3-4 2 1-4z" fill="#f0b030" stroke="#c0392b"/><path d="M12 8l4-5M4 17l3-3" stroke="#333" stroke-width="1.800"/><path d="M14 2l4 4" stroke="#c0392b"/></svg></button>
      </div>
      <div class="vbar full">
        <span class="vgrip"></span>
        <button class="t" aria-label="Bring to Front"><svg><path d="M2.500 2.500h7v7h-7zM10.500 10.500h7v7h-7z" fill="#dbe7f2" stroke="#3b6993"/><path d="M5.500 5.500h9v9h-9z" fill="#5482b0" stroke="#2f5f8d"/></svg></button>
        <button class="t" aria-label="Send to Back"><svg><path d="M6 5h10v9H6z" fill="#5482b0"/><path d="M3.500 2.500h7v6h-7zM10.500 9.500h7v6h-7z" fill="#dbe7f2" stroke="#3b6993"/></svg></button>
      </div>
    </div>
  </aside>
</main>

<section class="command">
  <span class="grip"></span>
  <div class="cmdbox">
    <pre class="history">Regenerating model.
AutoCAD menu utilities loaded.</pre>
    <div class="prompt">
      <label for="cmd">Command:</label><input id="cmd" type="text">
      <div class="cmdscroll">
        <button class="sb" aria-label="Scroll command left"><svg class="i15"><path d="M9.500 3.500L6 7l3.500 3.500" stroke="#3d567f" stroke-width="2.400"/></svg></button>
        <button class="sb" aria-label="Command position"><svg class="i15"><path d="M4.500 4v7M6.500 4v7M8.500 4v7M10.500 4v7" stroke="#8ba6e8"/></svg></button>
        <span class="track"></span>
        <button class="sb" aria-label="Scroll command right"><svg class="i15"><path d="M6 3.500L9.500 7 6 10.500" stroke="#3d567f" stroke-width="2.400"/></svg></button>
      </div>
    </div>
  </div>
</section>

<footer class="status">
  <output class="coords">128.1754, 79.6143 , 0.0000</output>
  <button>SNAP</button><button>GRID</button><button>ORTHO</button><button>POLAR</button><button>OSNAP</button><button class="down">OTRACK</button><button>LWT</button><button class="down">MODEL</button>
  <div class="tray">
    <button class="comm" aria-label="Communication Center"><svg class="i18" viewBox="0 0 18 18"><path d="M4 3q4-3 7 0t-2 7H6Q2 6 4 3z" fill="#a9bfd6" stroke="#49617c"/><path d="M2 15l5-6 4 7z" fill="#8fa4b8" stroke="#49617c"/><path d="M11 5l5.500 11H6z" fill="#ffeb20" stroke="#8c8410"/><path d="M11 9v4M11 14v1.500" stroke="#000" stroke-width="1.600"/></svg></button>
    <button class="traymenu" aria-label="Status bar menu"><svg class="i12"><path d="M2 6h9L6.500 10z" fill="#000"/></svg></button>
    <svg class="i12"><path d="M9 1h2v2H9zM5 5h2v2H5zM9 5h2v2H9zM1 9h2v2H1zM5 9h2v2H5zM9 9h2v2H9z" fill="#b9b7a4"/></svg>
  </div>
</footer>
</body>
</html>
```
FILE: styles.css
```css
:root {
  --face: #e7e9d9;
  --shade: #a9aa9a;
  --field: #f8f8f8;
  --edge: #7f9db9;
}

* { box-sizing: border-box; }

html { height: 100%; }

body {
  margin: 0;
  height: 100vh;
  display: flex;
  flex-direction: column;
  overflow: hidden;
  background: var(--face);
  border-right: 2px solid #0a4be0;
  border-bottom: 2px solid #0a4be0;
  font: 11px/14px "Liberation Sans", Arial, sans-serif;
  color: #000;
}

button {
  font: inherit;
  color: inherit;
  margin: 0;
  padding: 0;
  border: 0;
  background: none;
  flex: none;
}

svg { display: block; width: 20px; height: 20px; fill: none; flex: none; }
.defs { position: absolute; width: 0; height: 0; }
.i8 { width: 8px; height: 8px; }
.i12 { width: 12px; height: 12px; }
.i15 { width: 15px; height: 15px; }
.i18 { width: 17px; height: 17px; }
.k { stroke: #222; stroke-width: 1.4; }
.nd { fill: #1c5f82; stroke: none; }
.nc { fill: #f4fbff; stroke: #1c6a96; stroke-width: 1.3; }

/* Title and menu */
.titlebar {
  flex: none;
  height: 19px;
  display: flex;
  align-items: center;
  gap: 3px;
  padding: 0 2px;
  background: linear-gradient(#0a5ce8, #0452d8 30%, #0664fa 80%, #0442c0);
}
h1 {
  margin: 0;
  flex: 1;
  font: bold 12px/18px "Open Sans", "Noto Sans", sans-serif;
  color: #fff;
  text-shadow: 1px 1px 0 #0a2a80;
}
.winctl { display: flex; gap: 2px; }
.winctl button {
  width: 14px;
  height: 14px;
  border: 1px solid #dfe8fa;
  border-radius: 3px;
  background: #2a62dc;
}
.winctl .close { background: #d24e2c; }
.menubar {
  flex: none;
  height: 20px;
  display: flex;
  align-items: center;
  padding: 0 2px 2px 4px;
}
.menubar > button { margin-left: 11px; }
.menubar > svg + button { margin-left: 5px; }
.mdi { display: flex; gap: 3px; margin-left: auto; }
.mdi button {
  width: 16px;
  height: 16px;
  padding: 1px;
  background: #efefe8;
  border: 1px solid #fafaf6;
}

/* Horizontal toolbars */
.row { flex: none; display: flex; height: 28px; overflow: hidden; }
.bar {
  flex: none;
  display: flex;
  align-items: center;
  padding: 0 3px;
  border-top: 1px solid #fff;
  border-right: 1px solid var(--shade);
  border-bottom: 1px solid var(--shade);
}
.bar.grow { flex: 1 0 0; overflow: hidden; border-right: 0; }
.grip {
  flex: none;
  width: 7px;
  height: 24px;
  margin-right: 3px;
  background: linear-gradient(90deg, #fff 0 2px, #b5b6a6 2px 3px, transparent 3px 4px, #fff 4px 6px, #b5b6a6 6px);
}
.sep {
  flex: none;
  width: 2px;
  height: 20px;
  margin: 0 2px;
  background: linear-gradient(90deg, #b5b6a6 0 1px, #fff 1px);
}
.t {
  width: 23px;
  height: 22px;
  display: flex;
  align-items: center;
  justify-content: center;
}
.wide { width: 26px; }
.drop { width: 12px; height: 22px; display: flex; align-items: center; justify-content: center; }
.combo {
  position: relative;
  flex: none;
  display: flex;
  align-items: center;
  height: 22px;
  border: 1px solid var(--edge);
  background: var(--field);
}
.combo select {
  flex: 1;
  min-width: 0;
  height: 20px;
  padding: 0 18px 0 4px;
  border: 0;
  background: none;
  appearance: none;
  font: inherit;
  color: inherit;
}
.chev {
  position: absolute;
  right: 1px;
  top: 1px;
  width: 15px;
  height: 18px;
  padding-top: 2px;
  border-radius: 2px;
  background: linear-gradient(#d3e0fc, #b5c9f6);
  pointer-events: none;
}
.c100 { width: 100px; }
.c126 { width: 126px; }
.c150 { width: 150px; }
.c160 { width: 160px; }
.c300 { width: 300px; }
.off { background: var(--face); border-color: #c5c5b5; }
.off select { color: #a9aa9a; opacity: 1; padding-left: 8px; }
.layericons { width: 78px; height: 17px; margin-left: 3px; }
.swatch { width: 13px; height: 14px; margin-left: 2px; }
.linetype { width: 61px; height: 14px; margin-left: 4px; }
.weight { width: 35px; height: 14px; margin-left: 4px; }

/* Work area */
.work { flex: 1; min-height: 0; display: flex; overflow: hidden; }
.dock { flex: none; display: flex; align-items: stretch; }
.dock.right { padding-left: 2px; }
.stack { display: flex; flex-direction: column; }
.vbar {
  flex: none;
  align-self: flex-start;
  width: 26px;
  display: flex;
  flex-direction: column;
  align-items: center;
  padding: 2px 2px 3px 0;
  border-left: 1px solid #fff;
  border-right: 1px solid var(--shade);
  border-bottom: 1px solid var(--shade);
}
.vbar.full { align-self: stretch; }
.stack .full { flex: 1; }
.vgrip {
  flex: none;
  width: 21px;
  height: 7px;
  margin-bottom: 1px;
  background: linear-gradient(#fff 0 2px, #b5b6a6 2px 3px, transparent 3px 4px, #fff 4px 6px, #b5b6a6 6px);
}
.hsep {
  flex: none;
  width: 20px;
  height: 2px;
  margin: 2px 0;
  background: linear-gradient(#b5b6a6 0 1px, #fff 1px);
}
.view {
  flex: 1;
  min-width: 0;
  display: flex;
  flex-direction: column;
  border-left: 2px solid #8d8d80;
  border-top: 1px solid #716f64;
}
.viewtop { flex: 1; min-height: 0; display: flex; }
.canvas { position: relative; flex: 1; background: #000; overflow: hidden; }
.cross { position: absolute; left: 219px; top: 270px; width: 51px; height: 51px; }
.ucs { position: absolute; left: 3px; bottom: 4px; width: 80px; height: 76px; }
.ucs text { fill: #fff; font: 13px "Liberation Sans", Arial, sans-serif; }
.vscroll {
  flex: none;
  width: 17px;
  padding: 1px;
  display: flex;
  flex-direction: column;
  background: #f2f2ec;
}
.space { flex: 1; }
.sb {
  width: 15px;
  height: 15px;
  margin-bottom: 1px;
  overflow: hidden;
  border-radius: 2px;
  background: linear-gradient(#d6e2fd, #b9ccf8);
  box-shadow: 0 0 0 1px #aebfe4 inset;
}
.tabs { flex: none; height: 18px; display: flex; align-items: flex-start; }
.tabnav { display: flex; padding-right: 4px; }
.tabnav button {
  width: 18px;
  height: 16px;
  padding: 1px 2px;
  border: 1px solid #fff;
  border-right-color: #9c9d8e;
  border-bottom-color: #9c9d8e;
}
.tab {
  position: relative;
  z-index: 0;
  height: 16px;
  padding: 0 8px 0 6px;
  margin-right: -3px;
  background: #000;
  clip-path: polygon(0 0, 100% 0, calc(100% - 5px) 100%, 5px 100%);
}
.tab::before {
  content: "";
  position: absolute;
  z-index: -1;
  inset: 0 1px 1px 1px;
  background: #f3f4ea;
  clip-path: polygon(0 0, 100% 0, calc(100% - 5px) 100%, 5px 100%);
}
.tab.on { color: #fff; }
.tab.on::before { background: #000; }
.hscroll { width: 36%; margin-left: auto; display: flex; align-items: center; height: 17px; }
.split { width: 5px; height: 14px; margin: 0 1px 0 4px; border: 1px solid #b5b6a6; background: #f3f4ea; }
.track { flex: 1; align-self: stretch; background: #efefe8; }
.track.a { flex: 63; }
.track.b { flex: 37; }
.corner { width: 18px; }

/* Command window */
.command {
  flex: none;
  display: flex;
  margin-top: 5px;
  padding: 5px 7px 2px 6px;
  border-top: 1px solid #000;
  border-bottom: 2px solid #a5a696;
  box-shadow: 0 -5px 0 -4px #fff;
}
.command .grip { height: auto; margin: 2px 4px 2px 0; }
.cmdbox {
  flex: 1;
  min-width: 0;
  border-left: 1px solid #000;
  border-top: 1px solid #000;
  background: var(--field);
  font: 13px/13px "Liberation Mono", "Courier New", monospace;
}
.history { margin: 0; padding: 1px; font: inherit; height: 29px; border-bottom: 1px solid #a5a696; }
.prompt { display: flex; align-items: center; height: 16px; padding-left: 1px; }
.prompt input { flex: 1; min-width: 0; border: 0; padding: 0; height: 14px; background: none; font: inherit; }
.cmdscroll { display: flex; align-items: center; align-self: stretch; width: 86px; padding-left: 3px; padding-right: 18px; background: var(--face); }
.cmdscroll .sb + .sb { margin-left: 1px; }

/* Status bar */
.status {
  flex: none;
  display: flex;
  align-items: center;
  gap: 3px;
  height: 20px;
  padding: 1px 2px 0 5px;
  background: linear-gradient(#f1f1e6, #e7e9d9 40%, #ebe4c8);
}
.status > button, .coords {
  height: 18px;
  padding: 1px;
  border: 1px solid #fff;
  border-right-color: #b0b0a0;
  border-bottom-color: #b0b0a0;
}
.coords { width: 238px; margin-right: 1px; border-color: #b0b0a0 #fff #fff #b0b0a0; }
.status > .down { border-color: #000 #fff #fff #000; background: #f3f3ee; }
.tray { display: flex; align-items: center; gap: 4px; margin-left: auto; }
.comm { width: 23px; height: 18px; display: flex; justify-content: center; border: 1px solid #fff; border-top-color: #888; border-left-color: #888; }
```
